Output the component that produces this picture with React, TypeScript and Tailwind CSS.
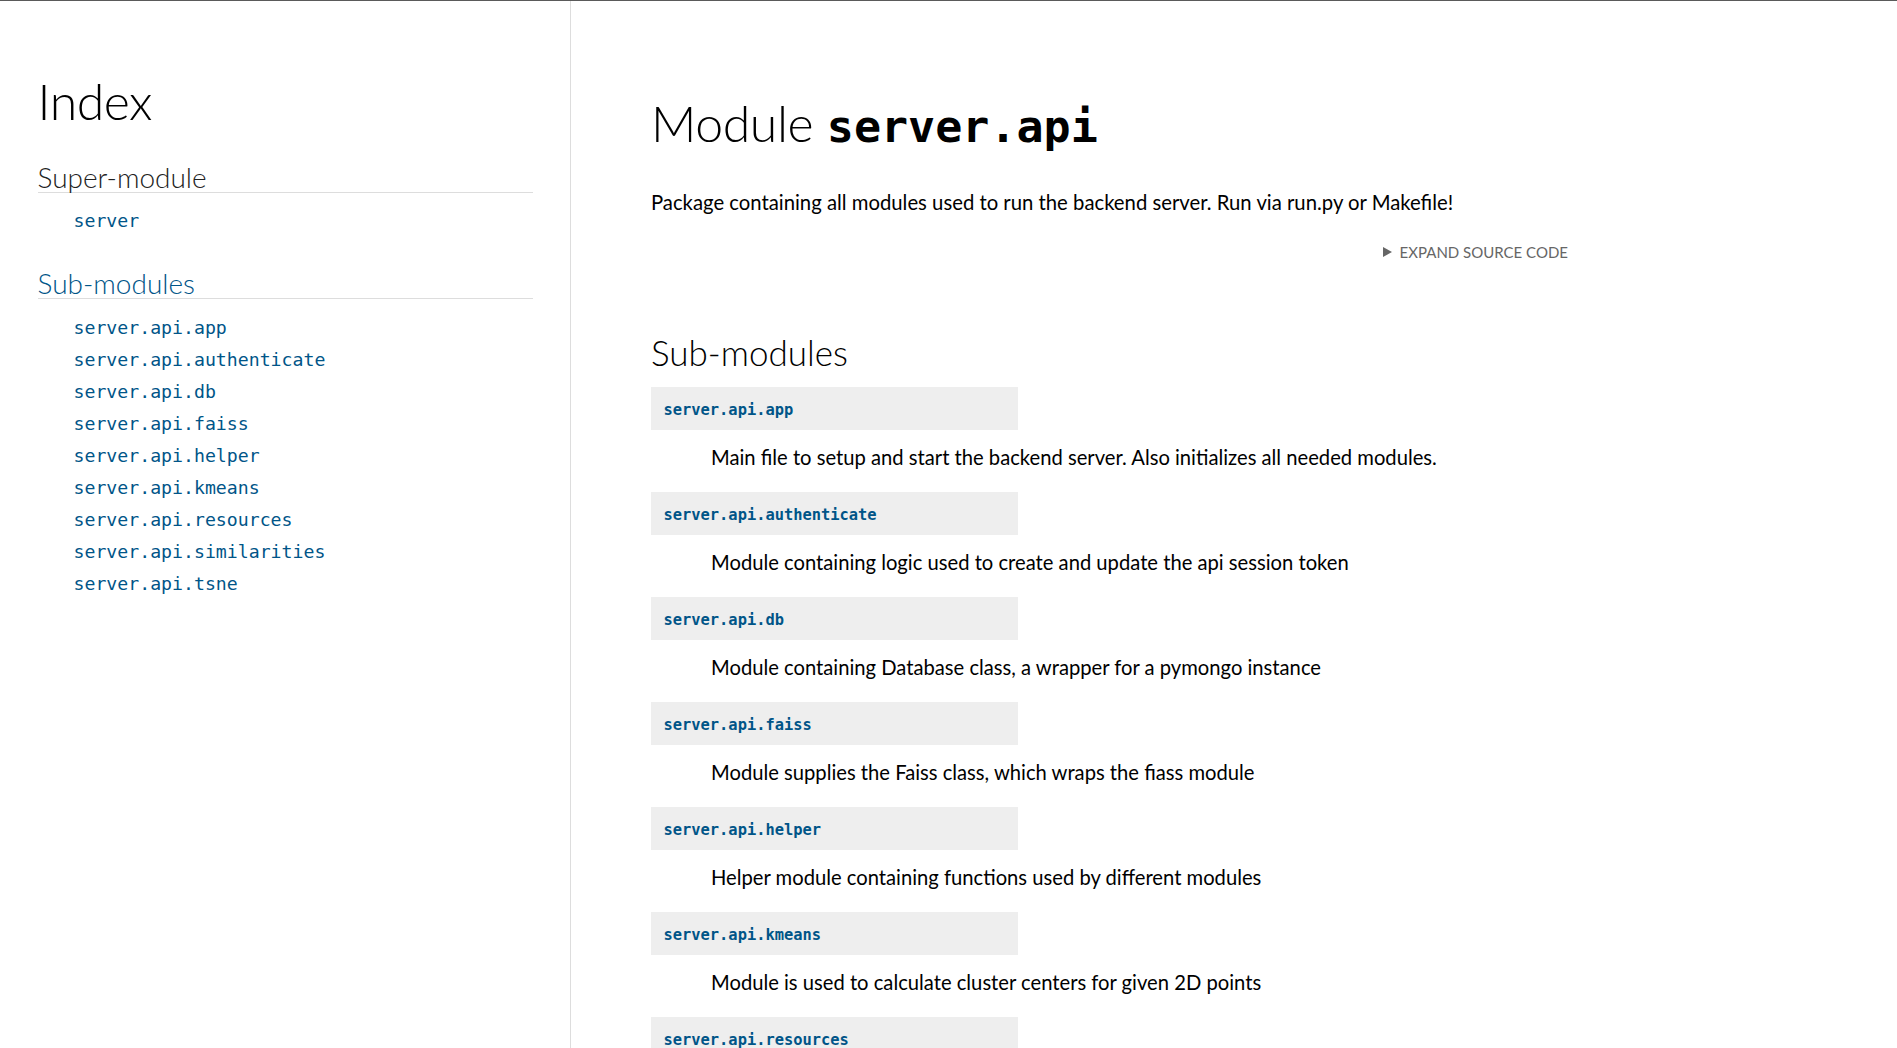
import React from 'react';

const subModules = [
  { name: 'server.api.app', desc: 'Main file to setup and start the backend server. Also initializes all needed modules.' },
  { name: 'server.api.authenticate', desc: 'Module containing logic used to create and update the api session token' },
  { name: 'server.api.db', desc: 'Module containing Database class, a wrapper for a pymongo instance' },
  { name: 'server.api.faiss', desc: 'Module supplies the Faiss class, which wraps the fiass module' },
  { name: 'server.api.helper', desc: 'Helper module containing functions used by different modules' },
  { name: 'server.api.kmeans', desc: 'Module is used to calculate cluster centers for given 2D points' },
  { name: 'server.api.resources', desc: 'Module containing all api resources and their routes' },
  { name: 'server.api.similarities', desc: 'Module used to compute similarities between items' },
  { name: 'server.api.tsne', desc: 'Module used to compute t-SNE embeddings' },
];

const Sidebar = () => (
  <nav className="w-[570px] shrink-0 px-[37.5px] pt-[73px]">
    <h1 className="text-[50px] leading-[55px] font-light tracking-[-0.5px] text-black">Index</h1>
    <ul>
      <li>
        <h3 className="mt-[33px] text-[28px] leading-[30px] font-light text-[#222] border-b border-[#ddd]">
          Super-module
        </h3>
        <ul className="mt-3 pl-[36px]">
          <li className="leading-[32px]">
            <a className="font-['DejaVu_Sans_Mono',monospace] text-[18.2px] text-[#058]">server</a>
          </li>
        </ul>
      </li>
      <li>
        <h3 className="mt-[31px] text-[28px] leading-[30px] font-light border-b border-[#ddd]">
          <a className="text-[#058]">Sub-modules</a>
        </h3>
        <ul className="mt-[13px] pl-[36px]">
          {subModules.map((m) => (
            <li key={m.name} className="leading-[32px]">
              <a className="font-['DejaVu_Sans_Mono',monospace] text-[18.2px] text-[#058]">{m.name}</a>
            </li>
          ))}
        </ul>
      </li>
    </ul>
  </nav>
);

const Content = () => (
  <main className="w-[1078px] shrink-0 border-l border-[#ddd] pl-[80px] pr-[80px] pt-[95px]">
    <h1 className="text-[50px] leading-[55px] font-light text-black">
      <span className="tracking-[-0.4px]">Module</span>{' '}
      <span className="font-['DejaVu_Sans_Mono',monospace] text-[45px] font-bold leading-none">server.api</span>
    </h1>
    <p className="mt-[36px] text-[20.3px] leading-[30px] text-black">
      Package containing all modules used to run the backend server. Run via run.py or Makefile!
    </p>
    <div className="mt-[20px] flex items-center justify-end gap-[8px] text-[15px] leading-[30px] uppercase text-[#666]">
      <svg width="9" height="10" viewBox="0 0 9 10">
        <polygon points="0,0 9,5 0,10" fill="#666" />
      </svg>
      <span>Expand source code</span>
    </div>
    <h2 className="mt-[70px] text-[35px] leading-[30px] font-light text-black">Sub-modules</h2>
    <dl className="mt-5">
      {subModules.map((m) => (
        <div key={m.name}>
          <dt className="h-[43px] w-[367px] bg-[#eee] px-[12.5px] leading-[43px]">
            <a className="font-['DejaVu_Sans_Mono',monospace] text-[15.4px] font-bold text-[#058]">{m.name}</a>
          </dt>
          <dd className="ml-[60px] mt-[12px] mb-[20px] text-[20.2px] leading-[30px] text-black">{m.desc}</dd>
        </div>
      ))}
    </dl>
  </main>
);

export default function App() {
  return (
    <div className="h-[1048px] overflow-hidden bg-white font-[Lato,sans-serif]">
      <div className="h-px bg-[#5a5a5a]" />
      <div className="flex">
        <Sidebar />
        <Content />
      </div>
    </div>
  );
}
